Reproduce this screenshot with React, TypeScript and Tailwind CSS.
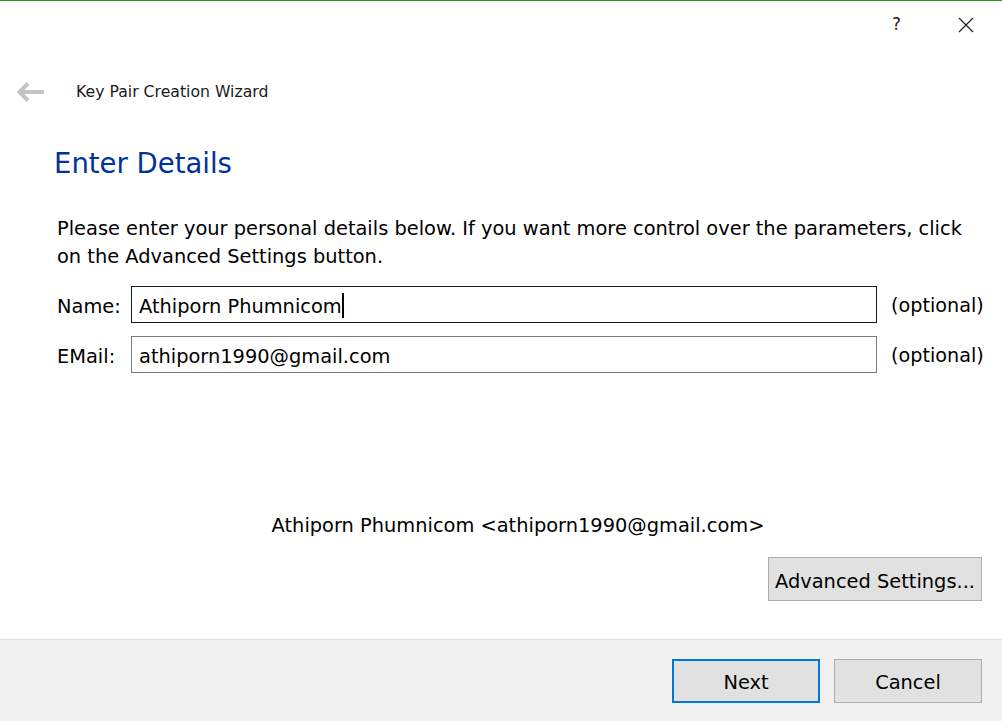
import React from "react";

const font = { fontFamily: '"DejaVu Sans", Tahoma, sans-serif' };

function BackArrow() {
  return (
    <svg width="30" height="22" viewBox="0 0 30 22" className="text-[#c4c4c4]">
      <path d="M29 11H5M13 2.5L4.5 11l8.5 8.5" fill="none" stroke="currentColor" strokeWidth="4" />
    </svg>
  );
}

function CloseIcon() {
  return (
    <svg width="16" height="16" viewBox="0 0 16 16">
      <path d="M1 1l14 14M15 1L1 15" stroke="#222" strokeWidth="1.2" />
    </svg>
  );
}

function Field({ label, value, focused }: { label: string; value: string; focused?: boolean }) {
  return (
    <div className="flex items-center">
      <span className="w-[74px] shrink-0 pt-[4px] text-[19.4px]">{label}</span>
      <div
        className={
          "flex h-[37px] w-[746px] shrink-0 items-center border px-[7px] pt-[4px] text-[19.4px] " +
          (focused ? "border-[#1a1a1a]" : "border-[#7a7a7a]")
        }
      >
        <span>{value}</span>
        {focused && <span className="mt-[-2px] h-[25px] w-[2px] bg-black" />}
      </div>
      <span className="ml-[14px] shrink-0 pt-[4px] text-[19.2px]">(optional)</span>
    </div>
  );
}

export default function App() {
  return (
    <div style={font} className="flex h-[721px] w-[1002px] flex-col overflow-hidden border-t border-[#1a9e1a] bg-white text-black">
      <div className="flex h-[47px] items-center justify-end">
        <span className="mr-[57px] text-[17px] text-[#222]">?</span>
        <span className="mr-[28px]">
          <CloseIcon />
        </span>
      </div>

      <div className="flex h-[90px] items-center pl-[15px] pb-[2px]">
        <BackArrow />
        <span className="ml-[31px] text-[15.7px] text-[#1a1a1a]">Key Pair Creation Wizard</span>
      </div>

      <div className="mt-[5px] pl-[54px] text-[27.5px] text-[#003399]">Enter Details</div>

      <div className="mt-[31px] pl-[57px]">
        <p className="pr-[30px] text-[19.4px] leading-[28px]">
          Please enter your personal details below. If you want more control over the parameters, click on the Advanced Settings button.
        </p>
        <div className="mt-[15px] flex flex-col gap-[13px]">
          <Field label="Name:" value="Athiporn Phumnicom" focused />
          <Field label="EMail:" value="athiporn1990@gmail.com" />
        </div>
      </div>

      <div className="mt-[138px] pl-[34px] text-center text-[19.4px]">Athiporn Phumnicom &lt;athiporn1990@gmail.com&gt;</div>

      <div className="mt-[17px] flex justify-end pr-[20px]">
        <button className="h-[44px] w-[214px] border border-[#adadad] bg-[#e1e1e1] pt-[4px] text-[19.4px]">Advanced Settings...</button>
      </div>

      <div className="mt-auto flex h-[82px] items-center justify-end gap-[14px] border-t border-[#dfdfdf] bg-[#f0f0f0] pr-[20px]">
        <button className="h-[44px] w-[148px] border-2 border-[#0078d7] bg-[#e1e1e1] pt-[4px] text-[19.4px]">Next</button>
        <button className="h-[44px] w-[148px] border border-[#adadad] bg-[#e1e1e1] pt-[4px] text-[19.4px]">Cancel</button>
      </div>
    </div>
  );
}
